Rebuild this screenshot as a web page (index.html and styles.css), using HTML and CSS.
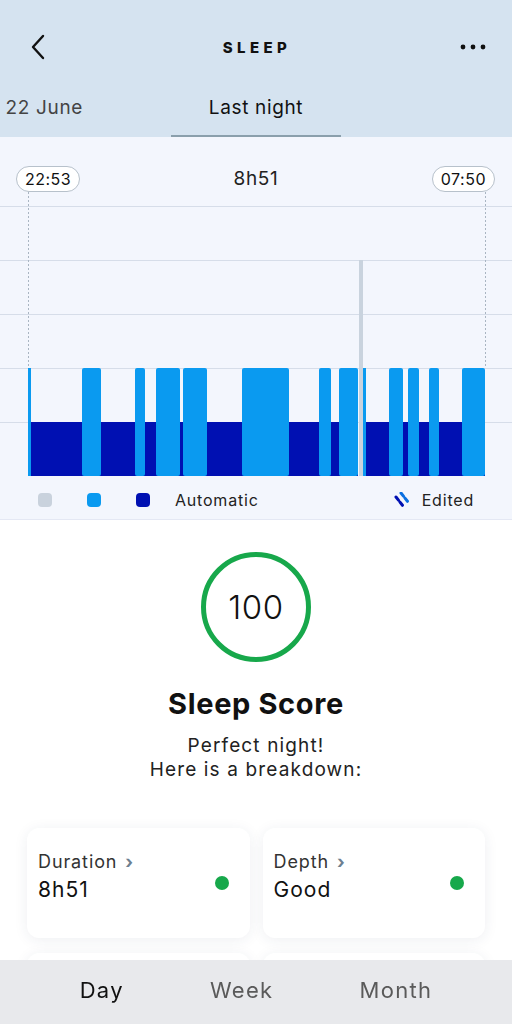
FILE: index.html
```html
<!DOCTYPE html>
<html lang="en">
<head>
    <meta charset="UTF-8">
    <meta name="viewport" content="width=device-width, initial-scale=1.0">
    <title>Sleep</title>
    <link rel="stylesheet" href="styles.css">
</head>
<body>
    <header class="top">
        <div class="titlebar">
            <svg class="back" width="16" height="26" viewBox="0 0 16 26">
                <path d="M13 2 L3 13 L13 24" fill="none" stroke="#111" stroke-width="2.4" stroke-linecap="round" stroke-linejoin="round"/>
            </svg>
            <h1 class="title">SLEEP</h1>
            <svg class="more" width="26" height="6" viewBox="0 0 26 6">
                <circle cx="3" cy="3" r="2.4" fill="#111"/>
                <circle cx="13" cy="3" r="2.4" fill="#111"/>
                <circle cx="23" cy="3" r="2.4" fill="#111"/>
            </svg>
        </div>
        <nav class="tabs">
            <div class="tab tab-prev">Sat. 22 June</div>
            <div class="tab active">Last night</div>
            <div class="tab"></div>
        </nav>
    </header>

    <section class="chart">
        <div class="chart-head">
            <span class="pill">22:53</span>
            <span class="total">8h51</span>
            <span class="pill">07:50</span>
        </div>
        <svg class="graph" width="512" height="288" viewBox="0 0 512 288">
            <!-- grid -->
            <g stroke="#d6dde9" stroke-width="1">
                <line x1="0" y1="14.5" x2="512" y2="14.5"/>
                <line x1="0" y1="68.5" x2="512" y2="68.5"/>
                <line x1="0" y1="122.5" x2="512" y2="122.5"/>
                <line x1="0" y1="176.5" x2="512" y2="176.5"/>
                <line x1="0" y1="230.5" x2="512" y2="230.5"/>
            </g>
            <!-- start / end markers -->
            <g stroke="#a9b5c2" stroke-width="1" stroke-dasharray="2 2">
                <line x1="28.5" y1="0" x2="28.5" y2="176"/>
                <line x1="485.5" y1="0" x2="485.5" y2="176"/>
            </g>
            <!-- deep sleep -->
            <g fill="#0010b2">
                <rect x="29" y="230" width="329" height="54"/>
                <rect x="363" y="230" width="122" height="54"/>
            </g>
            <!-- light sleep -->
            <g fill="#0a9af0">
                <rect x="28" y="176" width="3" height="108"/>
                <rect x="82" y="176" width="19" height="108" rx="2"/>
                <rect x="135" y="176" width="10" height="108" rx="2"/>
                <rect x="156" y="176" width="24" height="108" rx="2"/>
                <rect x="183" y="176" width="24" height="108" rx="2"/>
                <rect x="242" y="176" width="47" height="108" rx="2"/>
                <rect x="319" y="176" width="12" height="108" rx="2"/>
                <rect x="339" y="176" width="19" height="108" rx="2"/>
                <rect x="363" y="176" width="3" height="108"/>
                <rect x="389" y="176" width="14" height="108" rx="2"/>
                <rect x="408" y="176" width="11" height="108" rx="2"/>
                <rect x="429" y="176" width="10" height="108" rx="2"/>
                <rect x="462" y="176" width="23" height="108" rx="2"/>
            </g>
            <!-- awake marker -->
            <rect x="359" y="68" width="4" height="216" fill="#c9d3de"/>
        </svg>
        <div class="legend">
            <span class="swatch awake"></span>
            <span class="swatch light"></span>
            <span class="swatch deep"></span>
            <span class="legend-label">Automatic</span>
            <span class="legend-edited">
                <svg width="16" height="16" viewBox="0 0 16 16">
                    <g stroke-width="3" stroke-linecap="round" stroke-dasharray="4 2.5">
                        <line x1="2" y1="5" x2="9" y2="14" stroke="#0010b2"/>
                        <line x1="7" y1="1" x2="14" y2="10" stroke="#0a6fe0"/>
                    </g>
                </svg>
                Edited
            </span>
        </div>
    </section>

    <section class="score">
        <div class="ring">100</div>
        <h2 class="score-title">Sleep Score</h2>
        <p class="score-text">Perfect night!<br>Here is a breakdown:</p>
    </section>

    <section class="cards">
        <div class="card">
            <div class="card-body">
                <div class="card-label">Duration <span class="chev">›</span></div>
                <div class="card-value">8h51</div>
            </div>
            <span class="dot"></span>
        </div>
        <div class="card">
            <div class="card-body">
                <div class="card-label">Depth <span class="chev">›</span></div>
                <div class="card-value">Good</div>
            </div>
            <span class="dot"></span>
        </div>
        <div class="card"></div>
        <div class="card"></div>
    </section>

    <nav class="bottom">
        <span class="period active">Day</span>
        <span class="period">Week</span>
        <span class="period">Month</span>
    </nav>
</body>
</html>
```

FILE: styles.css
```css
body {
    margin: 0;
    padding: 0;
    font-family: Inter, "Noto Sans", sans-serif;
    letter-spacing: 0.04em;
    color: #111;
    background-color: #fff;
    width: 512px;
    overflow: hidden;
}

.top {
    background-color: #d5e3f0;
}

.titlebar {
    height: 94px;
    display: flex;
    align-items: center;
    justify-content: space-between;
    padding: 0 26px 0 30px;
}

.back {
    display: block;
}

.more {
    display: block;
}

.title {
    margin: 0;
    font-size: 15px;
    font-weight: 800;
    letter-spacing: 4.4px;
    padding-left: 8px;
}

.tabs {
    display: flex;
    justify-content: center;
}

.tab {
    width: 170px;
    flex: none;
    display: flex;
    justify-content: center;
    white-space: nowrap;
    font-size: 19px;
    line-height: 22px;
    padding: 3px 0 16px;
    border-bottom: 2px solid transparent;
    color: #444;
}

.tab-prev {
    justify-content: flex-end;
    padding-right: 88px;
    width: 82px;
}

.tab.active {
    color: #111;
    border-bottom-color: #8a9fac;
}

.chart {
    background-color: #f3f6fd;
    border-bottom: 1px solid #e4e8f4;
}

.chart-head {
    display: flex;
    align-items: center;
    justify-content: space-between;
    padding: 29px 17px 0 16px;
}

.pill {
    height: 24px;
    line-height: 24px;
    padding: 0 8px;
    border: 1px solid #b7c1cb;
    border-radius: 13px;
    background-color: #fff;
    font-size: 16px;
    letter-spacing: 0.03em;
}

.total {
    font-size: 19px;
    color: #222;
    margin-top: -2px;
}

.graph {
    display: block;
}

.legend {
    height: 39px;
    display: flex;
    align-items: center;
    padding: 0 38px 0 38px;
    font-size: 16px;
    letter-spacing: 0.05em;
    color: #222;
}

.swatch {
    width: 14px;
    height: 14px;
    border-radius: 4px;
    margin-right: 35px;
}

.swatch.awake {
    background-color: #c9d2dd;
}

.swatch.light {
    background-color: #0a9af0;
}

.swatch.deep {
    background-color: #0010b2;
    margin-right: 25px;
}

.legend-edited {
    margin-left: auto;
    display: flex;
    align-items: center;
    gap: 12px;
}

.score {
    display: flex;
    flex-direction: column;
    align-items: center;
    padding-top: 32px;
}

.ring {
    width: 100px;
    height: 100px;
    border: 5px solid #17a84b;
    border-radius: 50%;
    display: flex;
    align-items: center;
    justify-content: center;
    font-size: 33px;
    font-weight: 300;
}

.score-title {
    margin: 25px 0 0;
    font-size: 29px;
    line-height: 34px;
    font-weight: 700;
}

.score-text {
    margin: 13px 0 0;
    font-size: 19px;
    line-height: 24px;
    letter-spacing: 0.06em;
    text-align: center;
    color: #222;
}

.cards {
    display: grid;
    grid-template-columns: 1fr 1fr;
    gap: 15px 13px;
    padding: 46px 27px 0;
}

.card {
    height: 110px;
    background-color: #fff;
    border-radius: 12px;
    box-shadow: 0 2px 14px rgba(40, 50, 90, 0.08);
    display: flex;
    align-items: flex-start;
    justify-content: space-between;
    padding: 23px 21px 0 11px;
    box-sizing: border-box;
}

.card-label {
    font-size: 18px;
    line-height: 22px;
    letter-spacing: 0.05em;
    color: #333;
}

.chev {
    color: #6d8090;
    font-weight: 700;
    margin-left: 2px;
}

.card-value {
    margin-top: 3px;
    font-size: 21px;
    line-height: 28px;
    letter-spacing: 0.05em;
    color: #111;
}

.dot {
    width: 14px;
    height: 14px;
    border-radius: 50%;
    background-color: #17a84b;
    margin-top: 25px;
}

.bottom {
    position: fixed;
    left: 0;
    right: 0;
    bottom: 0;
    height: 64px;
    background-color: rgba(232, 233, 236, 0.98);
    display: flex;
    justify-content: center;
    align-items: center;
    gap: 86px;
    font-size: 22px;
    letter-spacing: 0.06em;
    padding-bottom: 4px;
    box-sizing: border-box;
}

.period {
    color: #5a5a5a;
}

.period.active {
    color: #111;
}
```
